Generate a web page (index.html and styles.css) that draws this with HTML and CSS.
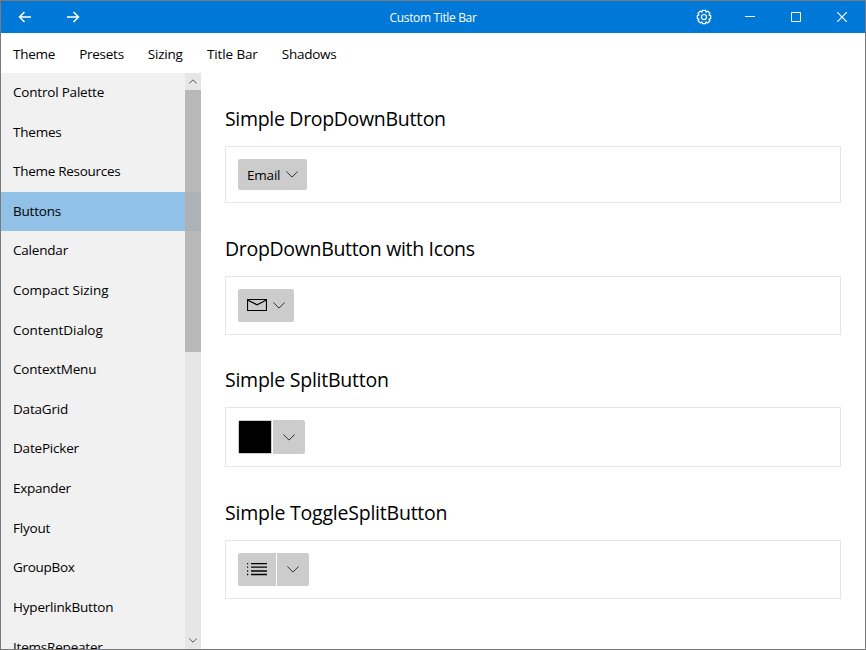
FILE: index.html
```html
<!DOCTYPE html>
<html lang="en">
<head>
<meta charset="utf-8">
<title>Custom Title Bar</title>
<link rel="stylesheet" href="styles.css">
</head>
<body>
<div class="window">
  <header class="titlebar">
    <div class="nav">
      <button class="tb"><svg width="14" height="12" viewBox="0 0 14 12"><path d="M13 6H1.5M6.5 1L1.5 6l5 5" stroke-width="1.5"/></svg></button>
      <button class="tb"><svg width="14" height="12" viewBox="0 0 14 12"><path d="M1 6h11.5M7.5 1l5 5-5 5" stroke-width="1.5"/></svg></button>
    </div>
    <div class="title"><span>Custom Title Bar</span></div>
    <div class="controls">
      <button class="wb"><svg width="16" height="16" viewBox="0 0 16 16"><path d="M6.3 1.3H9.7L10 3.2L11.8 2.1L14 4.2L12.9 6L14.7 6.4V9.6L12.9 10L14 11.8L11.8 13.9L10 12.8L9.7 14.7H6.3L6 12.8L4.2 13.9L2 11.8L3.1 10L1.3 9.6V6.4L3.1 6L2 4.2L4.2 2.1L6 3.2Z" stroke-width="1.2" stroke-linejoin="round"/><circle cx="8" cy="8" r="2.5" stroke-width="1.2"/></svg></button>
      <button class="wb"><svg width="10" height="10" viewBox="0 0 10 10"><path d="M0 4.5h10"/></svg></button>
      <button class="wb"><svg width="10" height="10" viewBox="0 0 10 10"><path d="M.5.5h9v9h-9z"/></svg></button>
      <button class="wb"><svg width="10" height="10" viewBox="0 0 10 10"><path d="M0 0l10 10M10 0L0 10" stroke-width="1.2"/></svg></button>
    </div>
  </header>
  <nav class="menu">
    <span>Theme</span><span>Presets</span><span>Sizing</span><span class="wide">Title Bar</span><span>Shadows</span>
  </nav>
  <div class="body">
    <aside class="sidebar">
      <ul class="list">
        <li>Control Palette</li>
        <li>Themes</li>
        <li class="tight">Theme Resources</li>
        <li class="selected">Buttons</li>
        <li>Calendar</li>
        <li class="loose">Compact Sizing</li>
        <li class="loose">ContentDialog</li>
        <li>ContextMenu</li>
        <li>DataGrid</li>
        <li>DatePicker</li>
        <li class="tight">Expander</li>
        <li>Flyout</li>
        <li class="tight">GroupBox</li>
        <li>HyperlinkButton</li>
        <li>ItemsRepeater</li>
      </ul>
      <div class="scrollbar">
        <div class="arrow"><svg width="8" height="5" viewBox="0 0 8 5"><path d="M.3 4.5L4 .8l3.7 3.7"/></svg></div>
        <div class="thumb"></div>
        <div class="arrow end"><svg width="8" height="5" viewBox="0 0 8 5"><path d="M.3.5L4 4.2 7.7.5"/></svg></div>
      </div>
    </aside>
    <main class="content">
      <section class="text-demo">
        <h2>Simple DropDownButton</h2>
        <div class="card">
          <button class="btn email"><span>Email</span><svg class="chev" width="12" height="7" viewBox="0 0 12 7"><path d="M.4.5L6 6.1 11.6.5"/></svg></button>
        </div>
      </section>
      <section class="icon-demo">
        <h2>DropDownButton with Icons</h2>
        <div class="card">
          <button class="btn mail"><svg width="20" height="13" viewBox="0 0 20 13"><path d="M.5.5h19v11H.5zM.5 1L10 5.8 19.5 1" stroke="#000" stroke-width="1.2"/></svg><svg class="chev" width="12" height="7" viewBox="0 0 12 7"><path d="M.4.5L6 6.1 11.6.5"/></svg></button>
        </div>
      </section>
      <section class="split-demo">
        <h2>Simple SplitButton</h2>
        <div class="card">
          <button class="btn swatch"><i></i></button><button class="btn drop"><svg class="chev" width="12" height="7" viewBox="0 0 12 7"><path d="M.4.5L6 6.1 11.6.5"/></svg></button>
        </div>
      </section>
      <section class="toggle-demo">
        <h2>Simple ToggleSplitButton</h2>
        <div class="card">
          <button class="btn bullets"><svg width="20" height="13" viewBox="0 0 20 13"><path d="M0 .5h1.2M4 .5h16M0 4.2h1.2M4 4.2h16M0 8h1.2M4 8h16M0 11.5h1.2M4 11.5h16" stroke="#000" stroke-width="1.3"/></svg></button><button class="btn drop"><svg class="chev" width="12" height="7" viewBox="0 0 12 7"><path d="M.4.5L6 6.1 11.6.5"/></svg></button>
        </div>
      </section>
    </main>
  </div>
</div>
</body>
</html>
```

FILE: styles.css
```css
* { box-sizing: border-box; }
body { margin: 0; font: 14px "Open Sans", "Noto Sans", sans-serif; color: #000; }
button { border: 0; padding: 0; margin: 0; background: none; font: inherit; color: inherit; }
svg { display: block; fill: none; stroke: currentColor; flex: none; }
.window { width: 866px; height: 650px; border: 1px solid #7a7a7a; background: #fff; display: flex; flex-direction: column; overflow: hidden; }
.titlebar { height: 32px; flex: none; background: #0078d7; color: #fff; display: grid; grid-template-columns: 184px 1fr 184px; }
.nav, .controls { display: flex; }
.tb { width: 48px; display: flex; align-items: center; justify-content: center; padding-bottom: 1px; }
.wb { width: 46px; display: flex; align-items: center; justify-content: center; }
.title { display: flex; align-items: center; justify-content: center; font-size: 12px; letter-spacing: -0.35px; padding-top: 1px; }
.menu { height: 40px; flex: none; display: flex; align-items: center; gap: 24px; padding: 2px 12px 0; letter-spacing: -0.25px; font-size: 13.5px; }
.menu .wide { letter-spacing: -0.13px; margin-left: 0.5px; }
.body { flex: 1; min-height: 0; display: flex; }
.sidebar { width: 200px; background: #f1f1f1; display: flex; overflow: hidden; }
.list { list-style: none; margin: 0; padding: 0; width: 184px; flex: none; font-size: 13.5px; letter-spacing: -0.2px; }
.list li { height: 39.62px; padding: 0 12px; line-height: 38.2px; }
.list .tight { letter-spacing: -0.28px; }
.list .loose { letter-spacing: -0.02px; }
.selected { background: #91c1e7; }
.scrollbar { width: 16px; background: #e6e6e6; color: #555; display: flex; flex-direction: column; }
.arrow { height: 17px; flex: none; display: flex; align-items: center; justify-content: center; }
.arrow.end { margin-top: auto; }
.thumb { height: 262px; background: linear-gradient(#b9b9b9 102px, #adb2b6 102px, #adb2b6 141px, #b9b9b9 141px); }
.content { flex: 1; padding: 19px 24px 0; display: flex; flex-direction: column; gap: 19px; }
h2 { margin: 0; height: 54px; line-height: 54px; font-weight: 400; font-size: 19.5px; letter-spacing: -0.32px; white-space: nowrap; }
.card { border: 1px solid #e6e6e6; padding: 12px; display: flex; }
.text-demo .card { height: 57px; }
.icon-demo .card, .toggle-demo .card { height: 59px; }
.split-demo { margin-top: -1px; }
.split-demo h2 { letter-spacing: -0.25px; }
.toggle-demo h2 { letter-spacing: -0.22px; }
.split-demo .card { height: 60px; }
.btn { background: #ccc; display: flex; align-items: center; border-radius: 2px; height: 100%; }
.chev { color: #333; stroke-width: 1; }
.email { width: 69px; justify-content: space-between; padding: 0 9px; font-size: 13.5px; letter-spacing: -0.2px; }
.mail { width: 56px; justify-content: space-between; padding: 0 9px 1px; }
.swatch { width: 34px; padding: 1px; border-radius: 2px 0 0 2px; }
.swatch i { width: 32px; height: 32px; background: #000; }
.drop { width: 32px; justify-content: center; border-radius: 0 2px 2px 0; margin-left: 1px; }
.bullets { width: 38px; justify-content: center; border-radius: 2px 0 0 2px; }
```
